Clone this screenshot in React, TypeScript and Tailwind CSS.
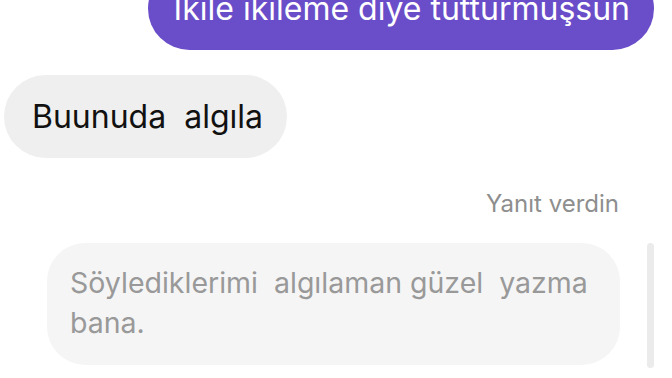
import React from 'react';

export default function App() {
  return (
    <div className="w-[672px] h-[378px] overflow-hidden bg-white font-['Inter',sans-serif]">
      <div className="flex flex-col">
        <div className="flex justify-end pr-[18px] -mt-[33px]">
          <div className="h-[83px] flex items-center rounded-full bg-[#6a4dc8] pl-[26px] pr-[24px] text-[32px] text-white">
            İkile ikileme diye tutturmuşsun
          </div>
        </div>

        <div className="flex mt-[25px] pl-[4px]">
          <div className="h-[83px] flex items-center rounded-full bg-[#efefef] pl-[28px] pr-[24px] text-[32px] text-[#111]">
            Buunuda&nbsp; algıla
          </div>
        </div>

        <div className="flex justify-end pr-[53px] mt-[32px] text-[24px] text-[#8e8e8e] leading-[28px]">
          Yanıt verdin
        </div>

        <div className="flex items-start mt-[25px] pl-[47px]">
          <div className="w-[573px] h-[122px] rounded-[38px] bg-[#f5f5f5] pl-[23px] pr-[16px] pt-[20px] text-[28.5px] leading-[40px] text-[#999]">
            Söylediklerimi&nbsp; algılaman güzel&nbsp; yazma bana.
          </div>
          <div className="ml-[27px] w-[7px] h-[125px] rounded-full bg-[#ebebeb]" />
        </div>
      </div>
    </div>
  );
}
